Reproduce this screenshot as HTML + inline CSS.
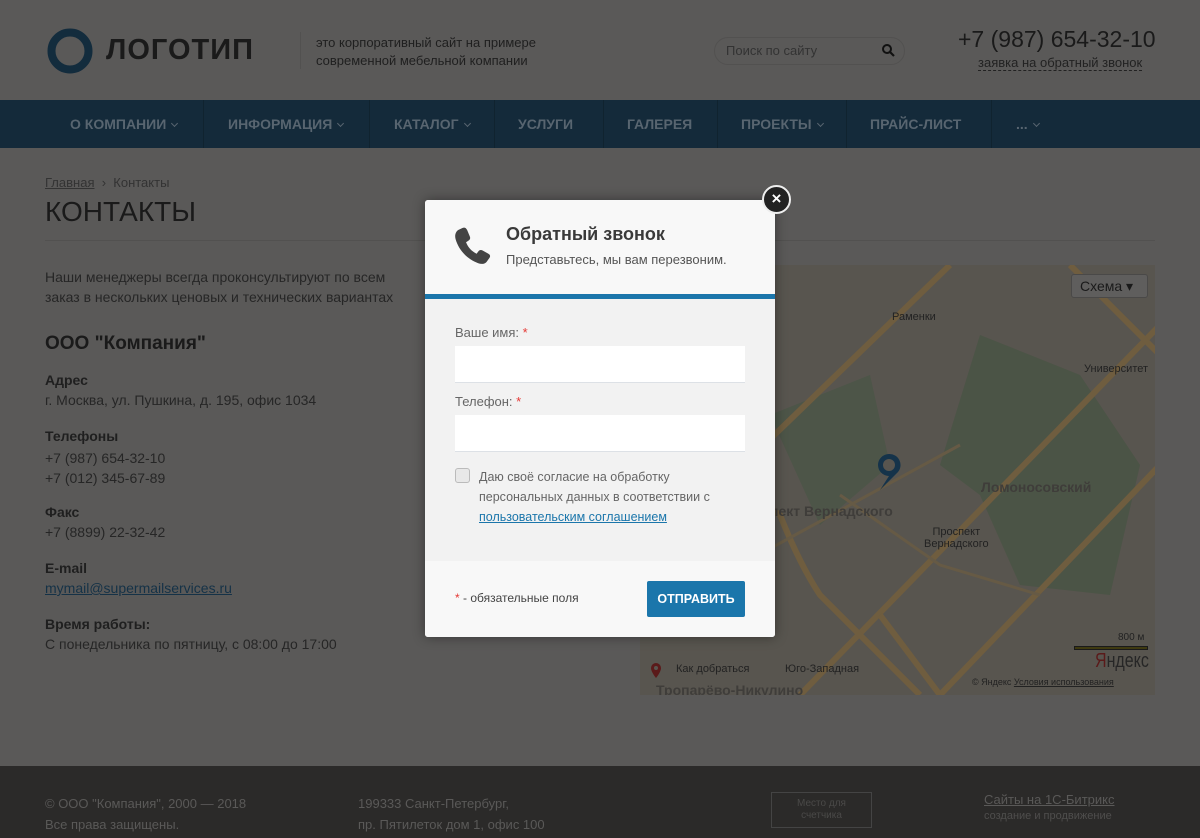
<!DOCTYPE html>
<html style="overflow:hidden"><head><meta charset="utf-8"><style>
*{margin:0;padding:0;box-sizing:border-box}
body{width:1200px;height:838px;overflow:hidden;position:relative;background:#5a5958;font-family:"Liberation Sans",sans-serif;color:#1f1f1f}
.a{position:absolute;white-space:nowrap}
.nav{position:absolute;left:0;top:100px;width:1200px;height:48px;background:#142a3a}
.nav span{position:absolute;top:0;line-height:48px;font-size:14px;font-weight:bold;color:#586570}
.nav i{display:inline-block;width:5px;height:5px;border-right:1.5px solid #586570;border-bottom:1.5px solid #586570;transform:rotate(45deg);margin-left:6px;vertical-align:3px}
.sep{position:absolute;top:0;width:1px;height:48px;background:#10232f}
.lbl{font-size:14px;font-weight:bold;color:#1f1f1f}
.val{font-size:14px;color:#262626}
.modal{position:absolute;left:425px;top:200px;width:350px;height:437px;background:#f2f2f2;border-radius:3px;box-shadow:0 0 12px rgba(0,0,0,.4);overflow:hidden}
.inp{position:absolute;left:30px;width:290px;height:37px;background:#fff;border-bottom:1px solid #dde1e6}
</style></head><body>
<!-- header -->
<svg class="a" style="left:47px;top:28px" width="46" height="46"><circle cx="23" cy="23" r="18.5" fill="none" stroke="#132c3d" stroke-width="8"/></svg>
<div class="a" style="left:106px;top:34px;font-size:29px;font-weight:bold;letter-spacing:1px;color:#1a1a1a">ЛОГОТИП</div>
<div class="a" style="left:300px;top:32px;width:1px;height:37px;background:#525150"></div>
<div class="a" style="left:316px;top:34px;font-size:13px;line-height:18px;color:#1f1f1f">это корпоративный сайт на примере<br>современной мебельной компании</div>
<div class="a" style="left:714px;top:37px;width:191px;height:28px;border:1px solid #525150;border-radius:14px"></div>
<div class="a" style="left:726px;top:43px;font-size:13px;color:#333">Поиск по сайту</div>
<svg class="a" style="left:881px;top:43px" width="14" height="14"><circle cx="6" cy="6" r="4" fill="none" stroke="#111" stroke-width="2"/><path d="M9 9l4 4" stroke="#111" stroke-width="2.2"/></svg>
<div class="a" style="left:958px;top:26px;font-size:23px;color:#1a1a1a">+7 (987) 654-32-10</div>
<div class="a" style="left:978px;top:55px;font-size:13px;color:#222;border-bottom:1px dashed #222;line-height:15px">заявка на обратный звонок</div>
<!-- nav -->
<div class="nav">
<span style="left:70px">О КОМПАНИИ<i></i></span><div class="sep" style="left:203px"></div>
<span style="left:228px">ИНФОРМАЦИЯ<i></i></span><div class="sep" style="left:369px"></div>
<span style="left:394px">КАТАЛОГ<i></i></span><div class="sep" style="left:494px"></div>
<span style="left:518px">УСЛУГИ</span><div class="sep" style="left:603px"></div>
<span style="left:627px">ГАЛЕРЕЯ</span><div class="sep" style="left:717px"></div>
<span style="left:741px">ПРОЕКТЫ<i></i></span><div class="sep" style="left:846px"></div>
<span style="left:870px">ПРАЙС-ЛИСТ</span><div class="sep" style="left:991px"></div>
<span style="left:1016px">...<i></i></span>
</div>
<!-- content -->
<div class="a" style="left:45px;top:175px;font-size:13px;color:#333"><u>Главная</u> &nbsp;›&nbsp; Контакты</div>
<div class="a" style="left:45px;top:196px;font-size:28px;color:#1a1a1a">КОНТАКТЫ</div>
<div class="a" style="left:45px;top:240px;width:1110px;height:1px;background:#525150"></div>
<div class="a" style="left:45px;top:267px;font-size:14px;line-height:20px;color:#262626">Наши менеджеры всегда проконсультируют по всем<br>заказ в нескольких ценовых и технических вариантах</div>
<div class="a" style="left:45px;top:333px;font-size:19px;font-weight:bold;color:#1a1a1a">ООО "Компания"</div>
<div class="a lbl" style="left:45px;top:372px">Адрес</div><div class="a val" style="left:45px;top:392px">г. Москва, ул. Пушкина, д. 195, офис 1034</div>
<div class="a lbl" style="left:45px;top:428px">Телефоны</div><div class="a val" style="left:45px;top:448px;line-height:20px">+7 (987) 654-32-10<br>+7 (012) 345-67-89</div>
<div class="a lbl" style="left:45px;top:504px">Факс</div><div class="a val" style="left:45px;top:524px">+7 (8899) 22-32-42</div>
<div class="a lbl" style="left:45px;top:560px">E-mail</div><div class="a val" style="left:45px;top:580px;color:#153247;text-decoration:underline">mymail@supermailservices.ru</div>
<div class="a lbl" style="left:45px;top:616px">Время работы:</div><div class="a val" style="left:45px;top:636px">С понедельника по пятницу, с 08:00 до 17:00</div>
<!-- map -->
<div class="a" style="left:640px;top:265px;width:515px;height:430px;background:#58554f;overflow:hidden">
<svg width="515" height="430" style="position:absolute;left:0;top:0">
<path d="M340 70 L440 110 L500 200 L470 330 L380 320 L340 230 L300 200 Z" fill="#4b5446"/>
<path d="M130 150 L230 110 L250 200 L180 260 Z" fill="#4d5548"/>
<g stroke="#6f5d3f" stroke-width="6" fill="none">
<path d="M0 300 L310 0"/><path d="M160 430 L520 60"/><path d="M300 430 L520 200"/>
<path d="M0 150 L140 250 Q160 300 180 330 L280 430"/><path d="M430 0 L520 90"/><path d="M240 350 L300 430"/>
</g>
<g stroke="#665a45" stroke-width="3" fill="none"><path d="M100 300 L320 180"/><path d="M200 230 L300 300 L400 330"/></g>
</svg>
<div class="a" style="left:431px;top:9px;width:77px;height:24px;background:#5f5e5d;border:1px solid #4a4948;border-radius:3px;font-size:14px;line-height:22px;padding-left:8px;color:#1a1a1a">Схема ▾</div>
<div class="a" style="left:252px;top:46px;font-size:11px;color:#222">Раменки</div>
<div class="a" style="left:444px;top:98px;font-size:11px;color:#222">Университет</div>
<div class="a" style="left:341px;top:214px;font-size:14px;font-weight:bold;color:#3f3d3a">Ломоносовский</div>
<div class="a" style="left:130px;top:238px;font-size:14px;font-weight:bold;color:#3f3d3a">пект Вернадского</div>
<div class="a" style="left:284px;top:261px;font-size:11px;line-height:12px;color:#222;text-align:center">Проспект<br>Вернадского</div>
<div class="a" style="left:145px;top:398px;font-size:11px;color:#222">Юго-Западная</div>
<div class="a" style="left:36px;top:398px;font-size:11px;color:#222">Как добраться</div>
<div class="a" style="left:16px;top:417px;font-size:14px;font-weight:bold;color:#3f3d3a">Тропарёво-Никулино</div>
<svg class="a" style="left:236px;top:187px" width="26" height="42"><path d="M13 2 A11 11 0 0 1 22 20 L4 38 L13 24 A11 11 0 0 1 13 2 Z" fill="#15334a"/><circle cx="13" cy="13" r="6" fill="#58554f"/></svg>
<svg class="a" style="left:10px;top:397px" width="12" height="17"><path d="M6 1a5 5 0 0 1 5 5c0 4-5 10-5 10S1 10 1 6a5 5 0 0 1 5-5z" fill="#5a1a1a"/><circle cx="6" cy="6" r="2" fill="#58554f"/></svg>
<div class="a" style="left:478px;top:367px;font-size:10px;color:#222">800 м</div>
<div class="a" style="left:434px;top:381px;width:74px;height:4px;background:#3f3a10;border:1px solid #1a1a1a"></div>
<div class="a" style="left:455px;top:385px;font-size:20px;color:#262626;transform:scaleX(.8);transform-origin:left"><span style="color:#5a1a1a">Я</span>ндекс</div>
<div class="a" style="left:332px;top:412px;font-size:9px;color:#222">© Яндекс <u>Условия использования</u></div>
</div>
<!-- footer -->
<div class="a" style="left:0;top:766px;width:1200px;height:72px;background:#2b2a29;overflow:hidden">
<div class="a" style="left:45px;top:27px;font-size:13px;line-height:21px;color:#5a5958">© ООО "Компания", 2000 — 2018<br>Все права защищены.</div>
<div class="a" style="left:358px;top:27px;font-size:13px;line-height:21px;color:#5a5958">199333 Санкт-Петербург,<br>пр. Пятилеток дом 1, офис 100<br>8</div>
<div class="a" style="left:771px;top:26px;width:101px;height:36px;border:1px solid #444;font-size:10px;line-height:12px;color:#4a4948;text-align:center;padding-top:5px">Место для<br>счетчика</div>
<div class="a" style="left:984px;top:26px;font-size:13px;color:#5a5958;text-decoration:underline">Сайты на 1С-Битрикс</div>
<div class="a" style="left:984px;top:44px;font-size:11px;color:#4f4e4d">создание и продвижение</div>
</div>
<!-- modal -->
<div class="modal">
<div class="a" style="left:0;top:0;width:350px;height:94px;background:#f8f8f8"></div>
<div class="a" style="left:0;top:94px;width:350px;height:5px;background:#1b76ab"></div>
<svg class="a" style="left:29px;top:27px" width="38" height="38" viewBox="0 0 36 36"><path d="M8 1c2-1 3.5 0 4.5 2l2.5 6c.8 2 0 3.2-1.6 4.2l-2 1.3c2 5 5.5 8.7 10 10.8l1.5-2c1.2-1.6 2.5-2 4.2-1l5.5 3c1.8 1 2 2.6 1 4l-2.8 3.8c-1.8 2-4.8 2.4-7.8 1.2C12.500 30.500 4.500 22 1.500 11.500c-1-3.700 0-7 2.500-8.700z" fill="#444"/></svg>
<div class="a" style="left:81px;top:24px;font-size:18px;font-weight:bold;color:#3a3a3a">Обратный звонок</div>
<div class="a" style="left:81px;top:52px;font-size:13px;color:#555">Представьтесь, мы вам перезвоним.</div>
<div class="a" style="left:30px;top:125px;font-size:13px;color:#666">Ваше имя: <span style="color:#e53935">*</span></div>
<div class="inp" style="top:146px"></div>
<div class="a" style="left:30px;top:194px;font-size:13px;color:#666">Телефон: <span style="color:#e53935">*</span></div>
<div class="inp" style="top:215px"></div>
<div class="a" style="left:30px;top:268px;width:15px;height:15px;border:1px solid #bbb;border-radius:3px;background:#e8e8e8"></div>
<div class="a" style="left:54px;top:267px;font-size:12.5px;line-height:20px;color:#666">Даю своё согласие на обработку<br>персональных данных в соответствии с<br><u style="color:#1b76ab">пользовательским соглашением</u></div>
<div class="a" style="left:0;top:361px;width:350px;height:76px;background:#f8f8f8"></div>
<div class="a" style="left:30px;top:391px;font-size:12px;color:#444"><span style="color:#e53935">*</span> - обязательные поля</div>
<div class="a" style="left:222px;top:381px;width:98px;height:36px;background:#1b76ab;border-radius:2px;color:#fff;font-size:12.5px;font-weight:bold;line-height:36px;text-align:center">ОТПРАВИТЬ</div>
</div>
<div class="a" style="left:762px;top:185px;width:29px;height:29px;border-radius:50%;background:#222;border:2px solid #eee;color:#fff;font-size:17px;font-weight:bold;line-height:24px;text-align:center">×</div>
</body></html>
